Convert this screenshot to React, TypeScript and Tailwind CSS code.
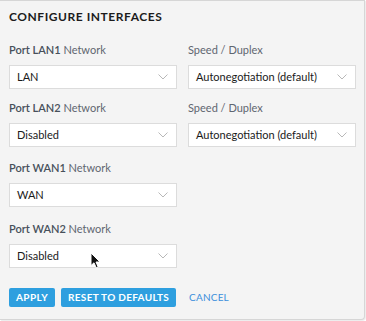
const rows = [
  { port: 'LAN1', value: 'LAN', speed: 'Autonegotiation (default)', gap: 'mt-0' },
  { port: 'LAN2', value: 'Disabled', speed: 'Autonegotiation (default)', gap: 'mt-[12px]' },
  { port: 'WAN1', value: 'WAN', gap: 'mt-[14px]' },
  { port: 'WAN2', value: 'Disabled', gap: 'mt-[15px]' },
];

function Chevron() {
  return (
    <svg width="10" height="6" viewBox="0 0 10 6" className="shrink-0">
      <path d="M0.5 0.5 L5 5 L9.5 0.5" fill="none" stroke="#b8b8b8" strokeWidth="1" />
    </svg>
  );
}

// mouse pointer captured in the screenshot
function Cursor() {
  return (
    <svg width="12" height="17" viewBox="0 0 12 17" className="absolute left-[90px] top-[252px]">
      <path
        d="M1 1 L1 13.5 L4 10.8 L6.2 15.8 L8.2 15 L6 10 L10 10 Z"
        fill="#111"
        stroke="#fff"
        strokeWidth="1"
        strokeLinejoin="round"
      />
    </svg>
  );
}

function Select({ value }: { value: string }) {
  return (
    <div className="flex h-[24px] w-[168px] items-center justify-between border border-[#dcdcdc] bg-white pl-[7px] pr-[8px] text-[11px] leading-[14px] text-[#1a1a1a]">
      <span>{value}</span>
      <Chevron />
    </div>
  );
}

export default function App() {
  return (
    <div className="relative h-[321px] w-[366px] bg-white font-['Lato','Liberation_Sans',sans-serif]">
      <div className="h-[320px] w-[365px] rounded-br-[4px] border-r border-b border-t border-[#d6d6d6] bg-[#f4f4f4] pl-[9px] pt-[8px] shadow-[1px_1px_1px_rgba(0,0,0,0.08)]">
        <h1 className="text-[12px] leading-[16px] font-bold tracking-[0.55px] text-[#1c1c1c]">CONFIGURE INTERFACES</h1>
        <div className="mt-[18px] flex flex-col">
          {rows.map((r) => (
            <div key={r.port} className={`flex gap-[11px] ${r.gap}`}>
              <div>
                <div className="mb-[8px] text-[11px] leading-[14px] text-[#5f6670]">
                  <span className="font-semibold text-[#47505a]">Port {r.port}</span> Network
                </div>
                <Select value={r.value} />
              </div>
              {r.speed && (
                <div>
                  <div className="mb-[8px] text-[11px] leading-[14px] text-[#5f6670]">Speed / Duplex</div>
                  <Select value={r.speed} />
                </div>
              )}
            </div>
          ))}
        </div>
        <div className="mt-[20px] flex items-center gap-[6px]">
          <button className="h-[19px] rounded-[2px] bg-[#2e9fdf] px-[7px] text-[10px] font-bold tracking-[0.4px] text-white">APPLY</button>
          <button className="h-[19px] rounded-[2px] bg-[#2e9fdf] px-[7px] text-[10px] font-bold tracking-[0.3px] text-white">RESET TO DEFAULTS</button>
          <button className="ml-[7px] text-[10px] tracking-[0.2px] text-[#3b8fdc]">CANCEL</button>
        </div>
      </div>
      <Cursor />
    </div>
  );
}
